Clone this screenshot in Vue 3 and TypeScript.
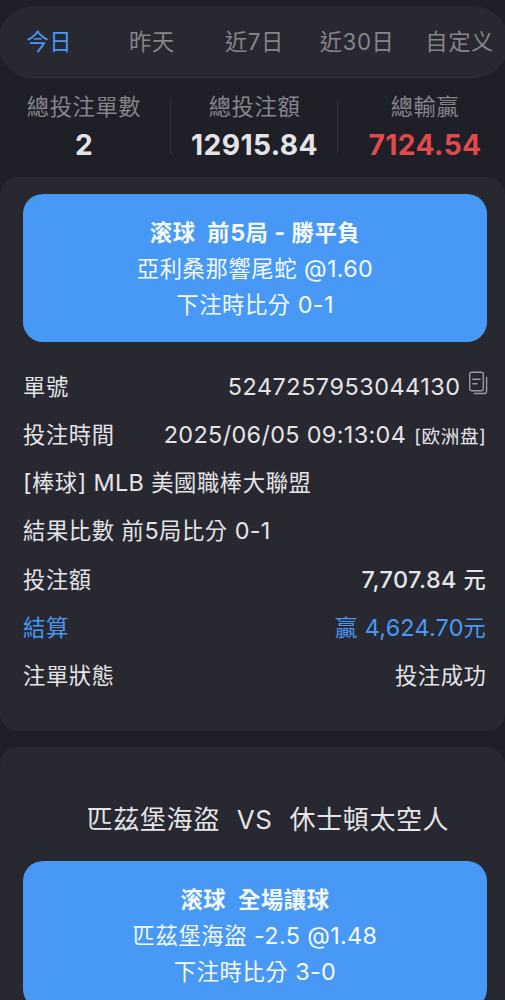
<script setup lang="ts">
import { h, type FunctionalComponent } from 'vue'

interface Row {
  label: string
  value?: string
  note?: string
  copy?: boolean
  kind?: string
}

// Sets Latin letters and digits a little larger than the Han characters around them.
const Mixed: FunctionalComponent<{ text: string }> = ({ text }) =>
  h(
    'span',
    { class: 'mixed' },
    (text.match(/[\u2e80-\u9fff]+|[^\u2e80-\u9fff]+/g) ?? []).map((part) =>
      /[\u2e80-\u9fff]/.test(part) ? part : h('span', { class: 'latin' }, part),
    ),
  )
Mixed.props = ['text']

const tabs: string[] = ['今日', '昨天', '近7日', '近30日', '自定义']

const stats = [
  { label: '總投注單數', value: '2', tone: '' },
  { label: '總投注額', value: '12915.84', tone: '' },
  { label: '總輸贏', value: '7124.54', tone: 'red' },
]

const rows: Row[] = [
  { label: '單號', value: '5247257953044130', copy: true, kind: 'serial' },
  { label: '投注時間', value: '2025/06/05 09:13:04', note: '[欧洲盘]', kind: 'time' },
  { label: '[棒球] MLB 美國職棒大聯盟', kind: 'league' },
  { label: '結果比數 前5局比分 0-1', kind: 'result' },
  { label: '投注額', value: '7,707.84 元', kind: 'amount' },
  { label: '結算', value: '贏 4,624.70元', kind: 'settle' },
  { label: '注單狀態', value: '投注成功', kind: 'status' },
]
</script>

<template>
  <main class="page">
    <nav class="tabs">
      <button v-for="(tab, i) in tabs" :key="tab" class="tab" :class="{ active: i === 0 }">{{ tab }}</button>
    </nav>

    <section class="stats">
      <div v-for="s in stats" :key="s.label" class="stat">
        <span class="stat-label">{{ s.label }}</span>
        <strong class="stat-value" :class="s.tone">{{ s.value }}</strong>
      </div>
    </section>

    <article class="card">
      <div class="pick">
        <strong><Mixed :text="'滚球\u00a0 前5局 - 勝平負'" /></strong>
        <Mixed text="亞利桑那響尾蛇 @1.60" />
        <Mixed text="下注時比分 0-1" />
      </div>
      <div class="rows">
        <div v-for="r in rows" :key="r.label" class="row" :class="r.kind">
          <Mixed class="label" :text="r.label" />
          <span v-if="r.value" class="value">
            <Mixed :text="r.value" />
            <small v-if="r.note" class="note">{{ r.note }}</small>
            <svg v-if="r.copy" class="copy" viewBox="0 0 20 24" fill="none" stroke="#9b9ba1" stroke-width="1.4" stroke-linecap="round">
              <rect x="1.7" y="1.2" width="13.6" height="18.6" rx="2" />
              <path d="M18.6 6.4V20.2a2.3 2.3 0 0 1-2.3 2.3H6.5M4.8 8.2h7.2M4.8 12.7h4.2" />
            </svg>
          </span>
        </div>
      </div>
    </article>

    <article class="card second">
      <h2 class="match"><span>匹茲堡海盜</span><span class="vs">VS</span><span>休士頓太空人</span></h2>
      <div class="pick">
        <strong><Mixed :text="'滚球\u00a0 全場讓球'" /></strong>
        <Mixed text="匹茲堡海盜 -2.5 @1.48" />
        <Mixed text="下注時比分 3-0" />
      </div>
    </article>
  </main>
</template>

<style>
html,
body {
  background: #1f1f28;
  overflow: hidden;
}
.mixed .latin {
  font-size: 23.4px;
  letter-spacing: 0.35px;
}
</style>

<style scoped>
.page {
  box-sizing: border-box;
  height: 1000px;
  padding-top: 6px;
  overflow: hidden;
  display: flex;
  flex-direction: column;
  background: #1f1f28;
  color: #e4e4e8;
  font-family: Inter, 'Noto Sans CJK TC', sans-serif;
  font-size: 22.3px;
  letter-spacing: 0.6px;
  white-space: nowrap;
}
.tabs {
  box-sizing: border-box;
  flex: none;
  height: 72px;
  display: grid;
  grid-template-columns: repeat(5, 102.6px);
  margin: 0 -4px 0 -2px;
  border-radius: 36px;
  background: #282830;
  border-bottom: 1px solid #303038;
}
.tab {
  padding: 0 0 4px;
  border: 0;
  background: none;
  color: #85858a;
  font: inherit;
  letter-spacing: inherit;
}
.tab.active {
  color: #4a98f5;
}
.stats {
  flex: none;
  height: 99px;
  display: grid;
  grid-template-columns: 171px 167px 1fr;
}
.stat {
  position: relative;
  display: flex;
  flex-direction: column;
  align-items: center;
}
.stat:first-child {
  padding-right: 3px;
}
.stat:last-child {
  padding-left: 7px;
}
.stat + .stat::before {
  content: '';
  position: absolute;
  left: -1px;
  top: 22px;
  width: 1px;
  height: 54px;
  background: #34343b;
}
.stat-label {
  line-height: 30px;
  margin-top: 14px;
  color: #85858a;
}
.stat-value {
  line-height: 36px;
  margin-top: 5px;
  font-size: 28.2px;
  font-weight: 700;
  letter-spacing: 0.4px;
}
.red {
  color: #e04a4a;
}
.card {
  box-sizing: border-box;
  flex: none;
  height: 554px;
  padding: 17px 18px 0 23px;
  border-radius: 18px;
  background: #282830;
}
.second {
  margin-top: 16px;
  padding-top: 50px;
}
.pick {
  box-sizing: border-box;
  height: 148px;
  padding-top: 21px;
  border-radius: 20px;
  background: #4899f6;
  color: #f3f9ff;
  display: flex;
  flex-direction: column;
  align-items: center;
  line-height: 36px;
}
.rows {
  padding-top: 21px;
  line-height: 36px;
}
.row {
  height: 48.15px;
  display: flex;
  align-items: center;
  justify-content: space-between;
  margin-right: 0.5px;
}
.value {
  display: flex;
  align-items: center;
}
.serial .value :deep(.latin) {
  letter-spacing: 0.52px;
}
.amount .value {
  font-weight: 500;
}
.amount .value :deep(.latin) {
  letter-spacing: 0.45px;
}
.settle .value :deep(.latin) {
  letter-spacing: 0.2px;
}
.note {
  margin-left: 8px;
  padding-top: 2px;
  font-size: 18.6px;
}
.copy {
  width: 20px;
  height: 24px;
  margin: -8px -1px 0 7px;
}
.settle {
  color: #4a98f5;
}
.match {
  height: 64px;
  margin: 0;
  padding-left: 26px;
  display: flex;
  justify-content: center;
  font-size: 26px;
  font-weight: 400;
  line-height: 46px;
}
.vs {
  margin: 0 17px;
}
</style>
